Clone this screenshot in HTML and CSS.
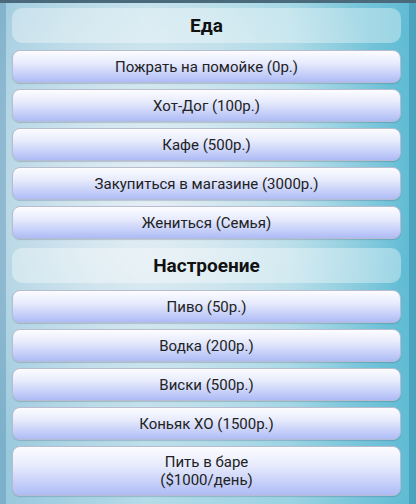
FILE: index.html
```html
<!DOCTYPE html>
<html lang="ru">
<head>
<meta charset="utf-8">
<link rel="stylesheet" href="styles.css">
</head>
<body>
<div class="screen">
  <div class="topbar"></div>
  <div class="list">
    <div class="section">Еда</div>
    <button class="btn">Пожрать на помойке (0р.)</button>
    <button class="btn">Хот-Дог (100р.)</button>
    <button class="btn">Кафе (500р.)</button>
    <button class="btn">Закупиться в магазине (3000р.)</button>
    <button class="btn">Жениться (Семья)</button>
    <div class="section section-2">Настроение</div>
    <button class="btn">Пиво (50р.)</button>
    <button class="btn">Водка (200р.)</button>
    <button class="btn">Виски (500р.)</button>
    <button class="btn">Коньяк ХО (1500р.)</button>
    <button class="btn btn-tall">Пить в баре<br>($1000/день)</button>
  </div>
</div>
</body>
</html>
```

FILE: styles.css
```css
* { box-sizing: border-box; }
html, body { margin: 0; padding: 0; }
body {
  width: 416px;
  height: 504px;
  overflow: hidden;
  font-family: Roboto, "Noto Sans", sans-serif;
}
.screen {
  width: 416px;
  height: 504px;
  background:
    linear-gradient(90deg, rgba(70,130,170,0.35) 0, rgba(70,130,170,0.35) 6px, rgba(0,0,0,0) 6px, rgba(0,0,0,0) 409px, rgba(40,120,150,0.35) 409px),
    radial-gradient(ellipse 260px 300px at 150px 200px, rgba(235,240,245,0.9), rgba(235,240,245,0) 100%),
    linear-gradient(90deg, #98c8dc 0%, #b4dbe8 35%, #9ad3e2 70%, #5cbad3 100%);
  display: flex;
  flex-direction: column;
}
.topbar {
  height: 3px;
  background: #4a6a7c;
  flex: none;
}
.list {
  display: flex;
  flex-direction: column;
  padding: 5px 15px 0 12px;
  gap: 6px;
}
.section {
  height: 35px;
  border-radius: 10px;
  background: rgba(255,255,255,0.36);
  display: flex;
  align-items: center;
  justify-content: center;
  font-weight: 700;
  font-size: 19px;
  color: #111;
  margin-bottom: 1px;
}
.section-2 { margin-top: 3px; }
.btn {
  height: 33px;
  border: 1px solid #b8bcd0;
  border-radius: 8px;
  background: linear-gradient(180deg, #fdfdff 0%, #e6eafc 40%, #aebcf6 100%);
  font-family: Roboto, "Noto Sans", sans-serif;
  font-size: 15px;
  color: #222;
  padding: 0;
  line-height: 18px;
  box-shadow: 0 1px 1px rgba(60,80,120,0.25);
}
.btn-tall { height: 50px; }
```
